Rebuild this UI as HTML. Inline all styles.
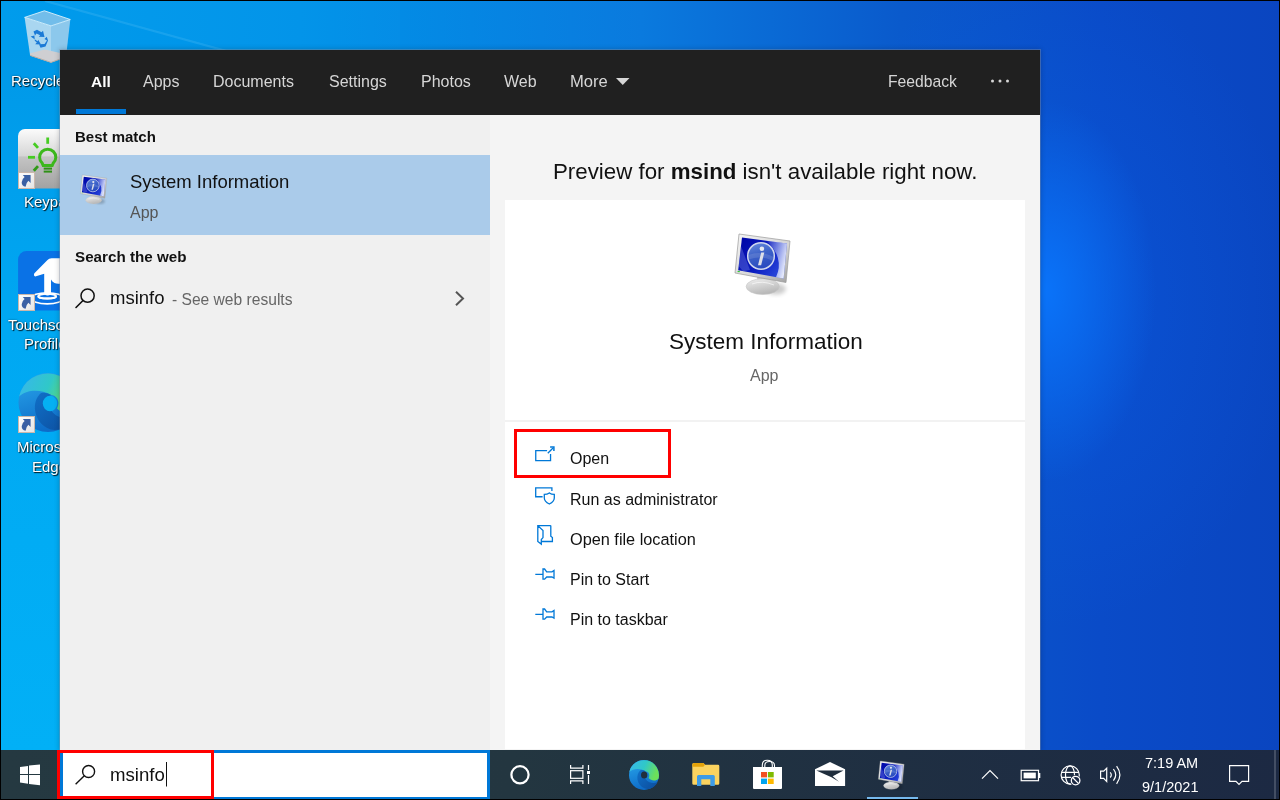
<!DOCTYPE html>
<html><head><meta charset="utf-8">
<style>
*{margin:0;padding:0;box-sizing:border-box}
html,body{width:1280px;height:800px;overflow:hidden;background:#000}
body{position:relative;font-family:"Liberation Sans",sans-serif}
.a{position:absolute}
.t{position:absolute;white-space:nowrap;line-height:1;will-change:transform}
#wall{left:1px;top:1px;width:1278px;height:749px;
 background:
  radial-gradient(ellipse 110px 190px at 1045px 290px, rgba(10,120,255,0.85), rgba(10,120,255,0) 100%),
  radial-gradient(ellipse 260px 330px at 1040px 300px, rgba(10,100,240,0.35), rgba(10,100,240,0) 100%),
  linear-gradient(90deg,#009cec 0px,#0092e8 300px,#0a7ade 640px,#0a5acc 900px,#0a4bc8 1100px,#0a45c0 1280px);}
#leftstrip{left:1px;top:50px;width:59px;height:700px;background:linear-gradient(180deg,#0098e8 0%,#00a8f2 40%,#02b0f6 100%)}
#panel{left:60px;top:50px;width:980px;height:700px;background:#f4f4f4;box-shadow:0 0 0 1px rgba(140,150,170,0.38),0 0 5px 1px rgba(0,0,0,0.2)}
#hdr{left:60px;top:50px;width:980px;height:65px;background:#202020}
#lpane{left:60px;top:115px;width:430px;height:635px;background:#f0f0f0}
#hl{left:60px;top:155px;width:430px;height:80px;background:#aacbea}
#card{left:505px;top:200px;width:520px;height:549px;background:#fff}
#div{left:505px;top:420px;width:520px;height:2px;background:#f2f2f2}
.tab{color:#d6d6d6;font-size:16px}
#taskbar{left:1px;top:750px;width:1278px;height:49px;background:linear-gradient(90deg,#253941 0%,#233640 40%,#1f2f42 70%,#1c2943 100%)}
.dl{font-size:15px;color:#fff;text-shadow:1px 1px 1px rgba(0,0,0,0.85),0 0 2px rgba(0,0,0,0.5)}
.menu{font-size:16px;color:#111}
</style></head><body>
<div class="a" id="wall"></div>
<div class="a" id="leftstrip"></div>


<!-- desktop icons -->
<svg class="a" style="left:1px;top:1px" width="400" height="50" viewBox="1 1 400 50"><path d="M45,1 L230,52" stroke="#a8e4ff" stroke-width="2.2" opacity="0.14"/><path d="M45,1 L230,52 L400,52 L400,1 Z" fill="#40c0ff" opacity="0.05"/></svg>
<svg class="a" style="left:0;top:0" width="75" height="480" viewBox="0 0 75 480">
 <defs>
  <linearGradient id="gBinL" x1="0" y1="0" x2="0" y2="1"><stop offset="0" stop-color="#b6def4"/><stop offset="1" stop-color="#a4d2ee"/></linearGradient>
  <linearGradient id="gKey" x1="0" y1="0" x2="0" y2="1"><stop offset="0" stop-color="#fbfbfb"/><stop offset="0.45" stop-color="#d6d6d6"/><stop offset="0.47" stop-color="#c4c4c4"/><stop offset="1" stop-color="#a2a2a2"/></linearGradient>
  <linearGradient id="gSc" x1="0" y1="0" x2="1" y2="1"><stop offset="0" stop-color="#ffffff"/><stop offset="1" stop-color="#e4e4e4"/></linearGradient>
  <symbol id="sc" viewBox="0 0 17 17">
   <rect x="0.5" y="0.5" width="16" height="16" fill="url(#gSc)" stroke="#cbb8ac" stroke-width="1"/>
   <path d="M4.8,2.9 H12.6 V11.1 L10.4,8.7 Q8,10.8 7.6,14.7 Q3.6,13.8 3.7,10.2 Q4.2,6.8 6.6,5 Z" fill="#3a60a4"/>
  </symbol>
 </defs>
 <!-- recycle bin -->
 <path d="M24.6,17.4 L30.1,55.4 L51,62.4 L51,25.9 Z" fill="#a9d6f0"/>
 <path d="M51,25.9 L51,62.4 L66,57 L70.3,19.5 Z" fill="#8cc8ec"/>
 <path d="M24.6,17.4 L44.4,10.8 L70.3,19.5 L51,25.9 Z" fill="#72bdea" stroke="#d8f0fc" stroke-width="0.9"/>
 <path d="M30.1,53.3 L45,49.6 L66.5,54.5 L66,57 L51,62.4 L30.1,55.4 Z" fill="#cfcfd2"/>
 <path d="M30.1,55.4 L51,62.4 L66,57" fill="none" stroke="#b8aca4" stroke-width="1"/>
 <g fill="#1b7ad6">
  <path d="M33.5,31.5 L37,29.8 L41.5,32.3 L43,30.8 L44.5,37 L38.8,36.8 L40.2,35.2 L36.5,33.5 L35,35.5 Z"/>
  <path d="M30.6,36.6 L34.4,35.6 L34.8,40.8 L36.8,42.4 L35.2,44.2 L41,44.6 L38.2,39.8 L37.6,41.2 Z" />
  <path d="M39,44.2 L44.5,44 L47,40.5 L44.5,39 L46.8,36.8 L48,40.5 L45.5,46.4 L40.5,47.8 Z"/>
 </g>
 <!-- keypad -->
 <rect x="18" y="129" width="60" height="59.5" rx="7" fill="url(#gKey)"/>
 <g stroke="#46cc22" stroke-width="2.8" fill="none">
  <path d="M42.2,163.2 A8.1,8.1 0 1,1 53.2,163.2 L52.2,165.5 H43.2 Z" stroke="#3cb81c" stroke-width="3"/>
  <path d="M47.7,137.5 V143.8"/>
  <path d="M28,157.3 H35"/>
  <path d="M33.8,143.2 L38,147.9"/>
  <path d="M33.8,170.7 L38,166.1" stroke="#2f9a16"/>
  <path d="M43.7,168.6 H52" stroke="#2f9016" stroke-width="2"/>
  <path d="M43.7,171.6 H52" stroke="#2f9016" stroke-width="2"/>
 </g>
 <svg x="18" y="172" width="17" height="17" viewBox="0 0 17 17"><use href="#sc"/></svg>
 <!-- touchscreen -->
 <rect x="18.1" y="251.1" width="60" height="59.5" rx="8.5" fill="#0a72e6"/>
 <ellipse cx="47.2" cy="298.3" rx="16" ry="5.6" fill="none" stroke="#fff" stroke-width="1.6"/>
 <ellipse cx="47.2" cy="296.2" rx="9" ry="2.3" fill="none" stroke="#fff" stroke-width="1.8"/>
 <path d="M35.2,276.4 Q33.2,275.6 34.4,273.2 L47.5,260 Q49,258.5 51.5,258.3 H62 V283.3 Q57.5,284.5 54.5,283 Q52,281.5 51,279.5 V292.5 Q51,295.5 47.6,295.5 Q44.2,295.5 44.2,292.5 V273.8 Z" fill="#fff"/>
 <path d="M38.2,296.2 A9,2.3 0 0,0 56.2,296.2" fill="none" stroke="#fff" stroke-width="1.8"/>
 <svg x="18" y="294" width="17" height="17" viewBox="0 0 17 17"><use href="#sc"/></svg>
 <!-- edge -->
 <svg x="16.5" y="371" width="63" height="63" viewBox="0 0 32 32"><use href="#edge"/></svg>
 <ellipse cx="50" cy="403.5" rx="7.2" ry="7.8" fill="#05b0f2"/>
 <svg x="18" y="416" width="17" height="17" viewBox="0 0 17 17"><use href="#sc"/></svg>
</svg>
<div class="t dl" style="left:11px;top:73.3px">Recycle Bin</div>
<div class="t dl" style="left:24.4px;top:194.3px">Keypad</div>
<div class="t dl" style="left:8.2px;top:317.3px">Touchscreen</div>
<div class="t dl" style="left:24px;top:336px">Profile</div>
<div class="t dl" style="left:17.2px;top:439px">Microsoft</div>
<div class="t dl" style="left:31.5px;top:459px">Edge</div>

<div class="a" id="panel"></div>
<div class="a" id="hdr"></div>
<div class="a" id="lpane"></div>
<div class="a" id="hl"></div>
<div class="a" id="card"></div>
<div class="a" id="div"></div>


<svg width="0" height="0" style="position:absolute">
 <defs>
  <linearGradient id="gFrame" x1="0" y1="0" x2="1" y2="1"><stop offset="0" stop-color="#f6f6f6"/><stop offset="0.6" stop-color="#d4d4d4"/><stop offset="1" stop-color="#a0a0a0"/></linearGradient>
  <linearGradient id="gScreen" x1="0" y1="0.2" x2="1" y2="0.8"><stop offset="0" stop-color="#0008a8"/><stop offset="0.5" stop-color="#0a1cc0"/><stop offset="1" stop-color="#3050e0"/></linearGradient>
  <linearGradient id="gHi" x1="0" y1="0.1" x2="1" y2="0.5"><stop offset="0" stop-color="#fff" stop-opacity="0.05"/><stop offset="0.45" stop-color="#e0e8ff" stop-opacity="0.45"/><stop offset="1" stop-color="#fff" stop-opacity="0.9"/></linearGradient>
  <linearGradient id="gCirc" x1="0" y1="0" x2="0.3" y2="1"><stop offset="0" stop-color="#6a8ee0"/><stop offset="0.5" stop-color="#3d62c8"/><stop offset="1" stop-color="#2a4cc0"/></linearGradient>
  <linearGradient id="gStand" x1="0" y1="0" x2="0.4" y2="1"><stop offset="0" stop-color="#f0f0f0"/><stop offset="1" stop-color="#b8b8b8"/></linearGradient>
  <filter id="fBlur" x="-50%" y="-50%" width="200%" height="200%"><feGaussianBlur stdDeviation="2"/></filter>

  <linearGradient id="gEdgeB" x1="0" y1="0" x2="0.3" y2="1"><stop offset="0" stop-color="#2aa8ec"/><stop offset="1" stop-color="#0e6cc8"/></linearGradient>
  <linearGradient id="gEdgeC" x1="0" y1="0" x2="1" y2="0.3"><stop offset="0" stop-color="#38b6ee"/><stop offset="0.55" stop-color="#30c8c8"/><stop offset="1" stop-color="#6ce05a"/></linearGradient>
  <linearGradient id="gEdgeD" x1="0" y1="0" x2="1" y2="1"><stop offset="0" stop-color="#1070c8"/><stop offset="1" stop-color="#0c4c9c"/></linearGradient>
  <symbol id="edge" viewBox="0 0 32 32">
   <circle cx="16" cy="16" r="15" fill="url(#gEdgeB)"/>
   <path d="M1.3,13 A15,15 0 1,1 30.6,19.5 C28,22.5 23,22 20.6,19 C22.2,16 21,12.5 17.6,12.2 C12,9 5,9.5 1.3,13 Z" fill="url(#gEdgeC)"/>
   <path d="M12.5,11.2 C7.5,15 8,26 17,29.6 C22,31.2 27.5,27.5 29.6,23.2 C25,24.8 20,23.6 17.6,20 C15,17 14.5,13.5 17.6,12.2 C15.6,11 14,10.8 12.5,11.2 Z" fill="url(#gEdgeD)"/>
  </symbol>
  <symbol id="si" viewBox="0 0 64 68">
   <ellipse cx="46" cy="59" rx="10" ry="5.5" fill="#000" opacity="0.2" filter="url(#fBlur)"/>
   <path d="M27,47 L38,49 L37.5,52 L27.5,51 Z" fill="#c8c8c8"/>
   <ellipse cx="32.75" cy="56.6" rx="16.6" ry="7.9" fill="url(#gStand)" stroke="#c4c4c4" stroke-width="0.6"/>
   <path d="M22,54 Q32,50 44,55" fill="none" stroke="#fff" stroke-width="1" opacity="0.6"/>
   <path d="M9,4 L60,11 L56,52.5 L5,43 Z" fill="url(#gFrame)" stroke="#9a9a9a" stroke-width="0.7"/>
   <path d="M12,7.6 L57,13.6 L53.6,48.6 L8.2,40.2 Z" fill="url(#gScreen)"/>
   <path d="M36,10.3 L57,13.6 L53.6,48.6 L46,47.2 Q55,28 36,10.3 Z" fill="url(#gHi)"/>
   <path d="M11,16 L20,40 L13,41.3 L8.6,36 Z" fill="#8090e8" opacity="0.35"/>
   <circle cx="31" cy="26" r="13.3" fill="url(#gCirc)" stroke="#d0d8ee" stroke-width="1.5"/>
   <path d="M18.5,25 Q31,20 43.5,27 L43.2,31 Q31,25 18.8,29.5 Z" fill="#fff" opacity="0.12"/>
   <ellipse cx="31.9" cy="18.7" rx="2.3" ry="2.2" fill="#e6e8f0"/>
   <path d="M31.2,22.6 L34.3,22.6 L31.1,35.2 L28,35.2 Z" fill="#dcdfe8"/>
   <rect x="7.6" y="41" width="2.2" height="1.1" fill="#3c3"/>
  </symbol>
 </defs>
</svg>
<svg class="a" style="left:730px;top:230px" width="64" height="68"><use href="#si"/></svg>
<svg class="a" style="left:77.9px;top:173.3px" width="30.7" height="32.6" viewBox="0 0 64 68"><use href="#si" width="64" height="68"/></svg>

<!-- tabs -->
<div class="t" style="left:91px;top:74px;font-size:15.5px;font-weight:bold;color:#fff">All</div>
<div class="a" style="left:76px;top:109px;width:50px;height:5px;background:#0078d7"></div>
<div class="t tab" style="left:143px;top:74px">Apps</div>
<div class="t tab" style="left:213px;top:74px">Documents</div>
<div class="t tab" style="left:329px;top:74px">Settings</div>
<div class="t tab" style="left:421px;top:74px">Photos</div>
<div class="t tab" style="left:504px;top:74px">Web</div>
<div class="t tab" style="left:570px;top:74px;font-size:16.6px">More</div>
<div class="t tab" style="left:888px;top:74px;font-size:15.7px">Feedback</div>

<!-- left pane -->
<div class="t" style="left:75px;top:129px;font-size:15px;font-weight:bold;color:#111">Best match</div>
<div class="t" style="left:130px;top:173px;font-size:18.5px;color:#111">System Information</div>
<div class="t" style="left:130px;top:205px;font-size:16px;color:#555">App</div>
<div class="t" style="left:75px;top:249px;font-size:15.2px;font-weight:bold;color:#111">Search the web</div>
<div class="t" style="left:110px;top:289px;font-size:18.5px;color:#111">msinfo</div><div class="t" style="left:171.5px;top:291.6px;font-size:15.6px;color:#666">- See web results</div>

<!-- right pane -->
<div class="t" style="left:553px;top:161px;font-size:22.3px;color:#111">Preview for <b>msind</b> isn't available right now.</div>
<div class="t" style="left:669px;top:331px;font-size:22.5px;color:#111">System Information</div>
<div class="t" style="left:750px;top:367.5px;font-size:16px;color:#666">App</div>

<div class="t menu" style="left:570px;top:451px">Open</div>
<div class="t menu" style="left:570px;top:492px">Run as administrator</div>
<div class="t menu" style="left:570px;top:531.3px;font-size:16.3px">Open file location</div>
<div class="t menu" style="left:570px;top:572px">Pin to Start</div>
<div class="t menu" style="left:570px;top:612px">Pin to taskbar</div>
<div class="a" style="left:514px;top:429px;width:157px;height:49px;border:3px solid #f00"></div>


<!-- header icons -->
<svg class="a" style="left:0;top:0" width="1280" height="800" viewBox="0 0 1280 800">
 <path d="M616,78 H629.5 L622.75,85 Z" fill="#d6d6d6"/>
 <circle cx="992.5" cy="81" r="1.5" fill="#d6d6d6"/><circle cx="1000" cy="81" r="1.5" fill="#d6d6d6"/><circle cx="1007.5" cy="81" r="1.5" fill="#d6d6d6"/>
 <!-- left pane magnifier + chevron -->
 <circle cx="87.6" cy="295.7" r="6.6" fill="none" stroke="#111" stroke-width="1.5"/>
 <path d="M76,307.5 L83,300.5" stroke="#111" stroke-width="1.6" fill="none" stroke-linecap="round"/>
 <path d="M456,291.8 L463,298.5 L456,305.2" stroke="#555" stroke-width="2" fill="none"/>
 <!-- menu icons -->
 <g fill="none" stroke="#0078d7" stroke-width="1.3">
  <path d="M547.1,450.55 H535.75 V460.6 H550.55 V454"/>
  <path d="M547.8,453.2 L553,448"/>
  <path d="M550.1,447.1 H553.9 V451" stroke-width="1.5"/>
  <path d="M542.6,496.75 H535.7 V487.9 H551.9 V490.9"/>
  <path d="M544.3,494.4 Q547.3,494.4 549.35,492.9 Q551.4,494.4 554.3,494.4 V498 Q554.3,501.5 549.35,504 Q544.3,501.5 544.3,498 Z"/>
  <path d="M550.8,525.6 H537.8 V541.5 L541.3,544.1 V539.5 L543,537.6 V530.5 L537.8,525.6 M541.5,541.5 H552.4 V537.6 L550.8,536.3 V525.6"/>
  <path d="M535.3,574.3 H543 M543,569 H544.6 L546.7,571.8 H552 L554,570.5 V578.2 L552,577 H546.7 L544.6,579.2 H543 Z"/>
  <path d="M535.3,614.3 H543 M543,609 H544.6 L546.7,611.8 H552 L554,610.5 V618.2 L552,617 H546.7 L544.6,619.2 H543 Z"/>
 </g>
</svg>

<!-- taskbar -->
<div class="a" id="taskbar"></div>
<svg class="a" style="left:876.2px;top:759px" width="30" height="32" viewBox="0 0 64 68"><use href="#si" width="64" height="68"/></svg>
<div class="a" style="left:60px;top:750px;width:430px;height:49px;background:#fff;border:3px solid #0078d7;border-bottom-width:2px"></div>
<div class="t" style="left:110px;top:766px;font-size:18.6px;color:#111">msinfo</div>
<svg class="a" style="left:0;top:750px" width="1280" height="50" viewBox="0 750 1280 50">
 <!-- windows logo -->
 <g fill="#fff">
  <path d="M20,766.9 L28,766.1 V773.9 H20 Z"/>
  <path d="M29,765.6 L40,764.6 V773.9 H29 Z"/>
  <path d="M20,775 H28 V783.7 L20,782.6 Z"/>
  <path d="M29,775 H40 V785.2 L29,784 Z"/>
 </g>
 <!-- cortana -->
 <circle cx="520" cy="774.8" r="8.6" fill="none" stroke="#fff" stroke-width="2.2"/>
 <!-- task view -->
 <g fill="none" stroke="#fff" stroke-width="1.2">
  <path d="M570.6,765 V768.2 H582.9 V765"/>
  <rect x="570.6" y="770.7" width="12.3" height="7.6"/>
  <path d="M570.6,784 V780.8 H582.9 V784"/>
  <path d="M588.5,765 V770 M588.5,775 V784"/>
 </g>
 <rect x="587" y="771" width="3" height="3" fill="#fff"/>
 <!-- edge -->
 <svg x="628" y="759" width="32" height="32" viewBox="0 0 32 32"><use href="#edge"/></svg>
 <ellipse cx="644.2" cy="775.1" rx="3.2" ry="3.5" fill="#222f3d"/>
 <!-- explorer -->
 <path d="M692.3,764.5 Q692.3,763 693.8,763 H703.4 L705,764.8 H718 Q719.3,764.8 719.3,766.2 V783.4 Q719.3,784.8 718,784.8 H693.7 Q692.3,784.8 692.3,783.4 Z" fill="#fbd35f"/>
 <path d="M692.3,764.5 Q692.3,763 693.8,763 H703.4 L705,764.8 L703.4,766.8 H692.3 Z" fill="#e3a20a"/>
 <path d="M697,786 V776.6 Q697,775.1 698.5,775.1 H713.3 Q714.8,775.1 714.8,776.6 V786 H710.3 V779.2 H701.3 V786 Z" fill="#3d9be6"/>
 <!-- store -->
 <path d="M762.3,767 V765 Q762.3,760.2 767.3,760.2 Q772.3,760.2 772.3,765 V767" fill="none" stroke="#fff" stroke-width="1.1"/>
 <path d="M764.8,767 V765.5 Q764.8,761.5 769.5,761.5 Q774.5,761.5 774.5,765.5 V767" fill="none" stroke="#fff" stroke-width="1.1"/>
 <path d="M753,767 H782 V788 Q782,789.1 780.9,789.1 H754.1 Q753,789.1 753,788 Z" fill="#fff"/>
 <rect x="761" y="772" width="6" height="5.4" fill="#f25022"/>
 <rect x="767.9" y="772" width="5.8" height="5.4" fill="#7fba00"/>
 <rect x="761" y="778.6" width="6" height="5.4" fill="#00a4ef"/>
 <rect x="767.9" y="778.6" width="5.8" height="5.4" fill="#ffb900"/>
 <!-- mail -->
 <path d="M815,769.3 L830,762.1 L845.1,769.3 V786.1 H815 Z" fill="#fff"/>
 <path d="M816.3,770.4 H843.6 L832.7,776.3 L839,781.8 L831.5,777.3 Z" fill="#1f2d3c"/>
 <!-- active indicator -->
 <rect x="867" y="797" width="51" height="2" fill="#76b9ed"/>
 <!-- tray -->
 <g fill="none" stroke="#fff" stroke-width="1.2">
  <path d="M982,778.7 L990,770.6 L998,778.7"/>
  <rect x="1021.2" y="770.3" width="17.3" height="10.4"/>
  <circle cx="1070.2" cy="775" r="9.1"/>
  <ellipse cx="1070" cy="775" rx="4.5" ry="9.1"/>
  <path d="M1061.5,772.3 H1079 M1061.5,777.4 H1071"/>
  <path d="M1100.6,771.1 H1103.7 L1106.7,768.1 V781.6 L1103.7,778.45 H1100.6 Z"/>
  <path d="M1110.2,772.3 Q1112.4,774.9 1110.2,777.5"/>
  <path d="M1113.4,769 Q1118,774.8 1113.4,780.6"/>
  <path d="M1116.6,766.2 Q1123.2,775 1116.6,783.8"/>
  <path d="M1229.6,765.6 H1248.6 V781.4 H1242 L1239,784.4 L1236,781.4 H1229.6 Z"/>
 </g>
 <rect x="1038.5" y="773" width="1.8" height="5" fill="#fff"/>
 <rect x="1023.6" y="772.6" width="12.2" height="5.8" fill="#fff"/>
 <circle cx="1075.6" cy="780.6" r="5.6" fill="#1c2943"/>
 <circle cx="1075.6" cy="780.6" r="4.3" fill="none" stroke="#fff" stroke-width="1.3"/>
 <path d="M1072.8,777.8 L1078.4,783.4" stroke="#fff" stroke-width="1.3"/>
 <rect x="1274.5" y="750" width="1" height="49" fill="#6b7585"/>
 <!-- search glass in box -->
 <circle cx="88.6" cy="771.5" r="6" fill="none" stroke="#111" stroke-width="1.4"/>
 <path d="M75.6,784.2 L84.3,775.7" stroke="#111" stroke-width="1.4"/>
 <rect x="166" y="762" width="1" height="24.5" fill="#111"/>
</svg>

<div class="a" style="left:57px;top:750px;width:157px;height:49px;border:3px solid #f00;border-bottom-width:3px"></div>
<div class="t" style="left:1145px;top:756px;font-size:14.5px;color:#fff">7:19 AM</div>
<div class="t" style="left:1142px;top:780px;font-size:14.5px;color:#fff">9/1/2021</div>
</body></html>
